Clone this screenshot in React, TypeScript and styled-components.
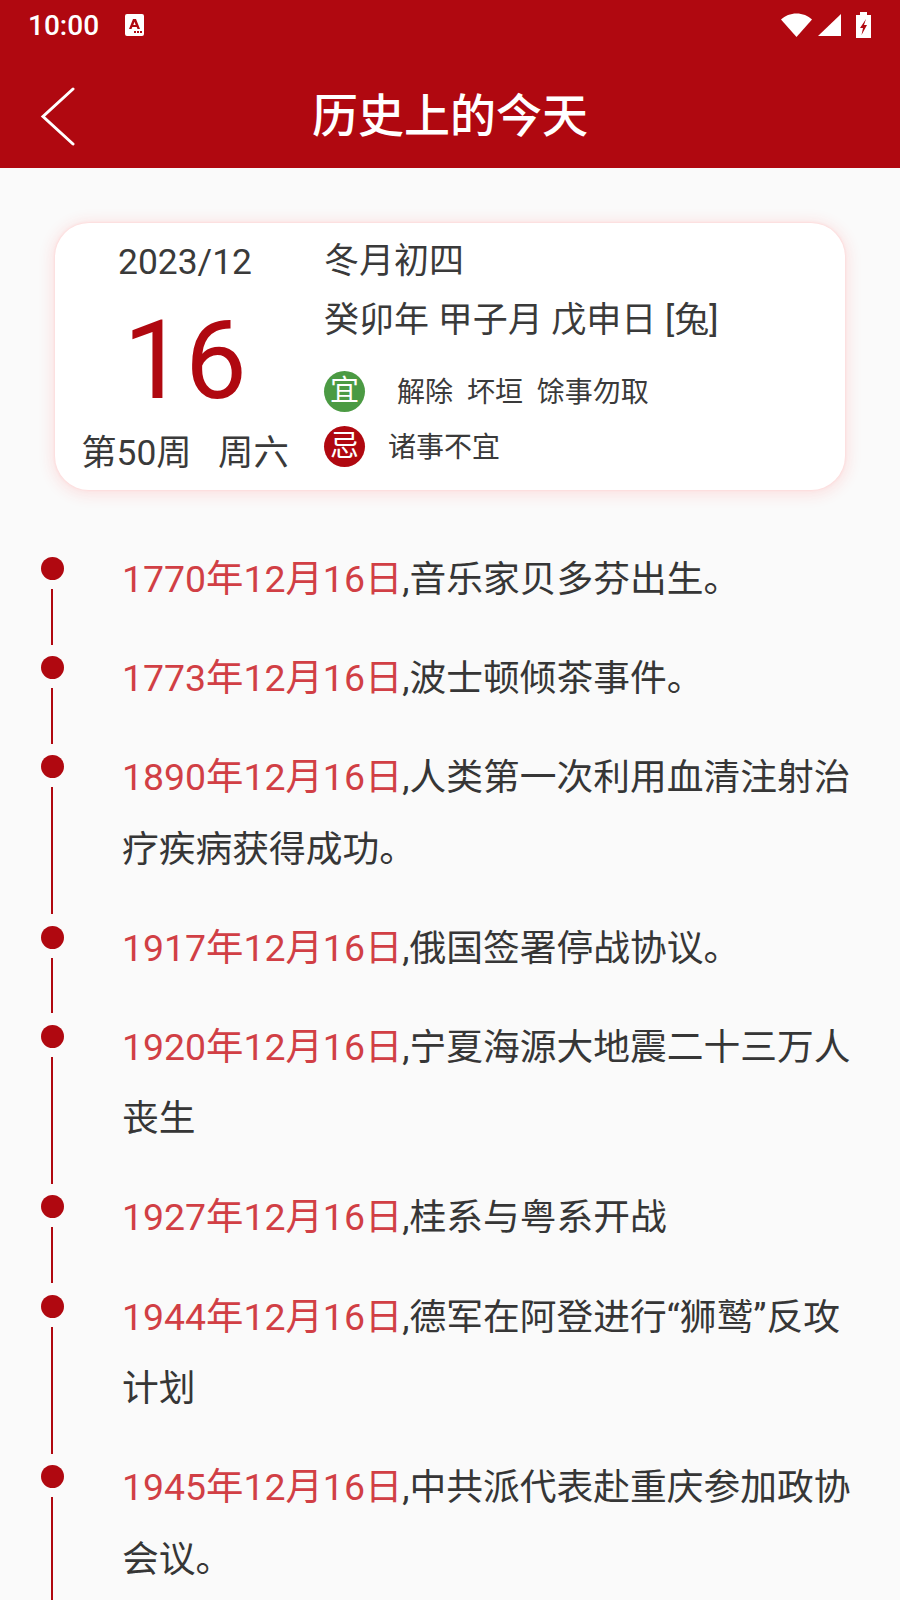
import React from "react";
import styled, { createGlobalStyle } from "styled-components";

const events = [
  { date: "1770年12月16日", text: ",音乐家贝多芬出生。" },
  { date: "1773年12月16日", text: ",波士顿倾茶事件。" },
  { date: "1890年12月16日", text: ",人类第一次利用血清注射治疗疾病获得成功。" },
  { date: "1917年12月16日", text: ",俄国签署停战协议。" },
  { date: "1920年12月16日", text: ",宁夏海源大地震二十三万人丧生" },
  { date: "1927年12月16日", text: ",桂系与粤系开战" },
  { date: "1944年12月16日", text: ",德军在阿登进行“狮鹫”反攻计划" },
  { date: "1945年12月16日", text: ",中共派代表赴重庆参加政协会议。" },
];

const GlobalStyle = createGlobalStyle`
  html, body {
    margin: 0;
    padding: 0;
    background: #fafafa;
  }
  body {
    font-family: Roboto, "Noto Sans CJK SC", sans-serif;
  }
`;

const Page = styled.div`
  width: 900px;
  height: 1600px;
  overflow: hidden;
  background: #fafafa;
  color: #333;
`;

const Header = styled.header`
  height: 168px;
  background: #b00810;
  color: #fff;
  display: flex;
  flex-direction: column;
`;

const StatusBar = styled.div`
  height: 50px;
  padding: 0 29px 0 28px;
  display: flex;
  align-items: center;
  font-size: 28px;
  font-weight: 500;
`;

const StatusTime = styled.span`
  width: 97px;
`;

const StatusRight = styled.div`
  margin-left: auto;
  display: flex;
  align-items: center;
`;

const WifiIcon = styled.svg`
  margin-right: 6px;
`;

const BatteryIcon = styled.svg`
  margin-left: 15px;
`;

const TitleBar = styled.div`
  flex: 1;
  position: relative;
  display: flex;
  align-items: center;
  justify-content: center;
  padding-top: 5px;
`;

const BackIcon = styled.svg`
  position: absolute;
  left: 38px;
  top: 37px;
`;

const Title = styled.h1`
  margin: 0;
  font-size: 46px;
  font-weight: 500;
`;

const Card = styled.section`
  margin: 55px 55px 0;
  height: 267px;
  box-sizing: border-box;
  background: #fff;
  border-radius: 34px;
  box-shadow: 0 0 2px 1px #fddcdc, 0 2px 14px 4px #fbe3e3;
  display: flex;
`;

const DateColumn = styled.div`
  width: 260px;
  flex-shrink: 0;
  display: flex;
  flex-direction: column;
  align-items: center;
`;

const MonthText = styled.div`
  margin-top: 16px;
  font-size: 35.4px;
  line-height: 46px;
  color: #3a3a3a;
`;

const DayText = styled.div`
  margin-top: 13px;
  font-size: 110px;
  line-height: 126px;
  color: #b00810;
`;

const WeekText = styled.div`
  margin-top: 4px;
  font-size: 35.4px;
  line-height: 50px;
  white-space: pre;
  color: #3a3a3a;
`;

const InfoColumn = styled.div`
  margin-left: 9px;
  display: flex;
  flex-direction: column;
  color: #3a3a3a;
`;

const MoonLine = styled.div`
  margin-top: 16px;
  font-size: 35px;
  line-height: 46px;
`;

const GanzhiLine = styled(MoonLine)`
  margin-top: 13px;
`;

const TagRow = styled.div<{ $top: number }>`
  margin-top: ${(p) => p.$top}px;
  display: flex;
  align-items: center;
  font-size: 28px;
  line-height: 41px;
  white-space: pre;
`;

const TagBadge = styled.span<{ $color: string }>`
  width: 41px;
  height: 41px;
  border-radius: 50%;
  background: ${(p) => p.$color};
  color: #fff;
  font-size: 29px;
  text-align: center;
  flex-shrink: 0;
`;

const TagText = styled.span<{ $indent: number }>`
  margin-left: ${(p) => p.$indent}px;
  padding-top: 2px;
  line-height: 39px;
`;

const Timeline = styled.ol`
  list-style: none;
  margin: 53px 0 0;
  padding: 0 41px;
`;

const Item = styled.li`
  display: flex;
  padding-bottom: 26.6px;
`;

const Rail = styled.div`
  width: 23px;
  flex-shrink: 0;
  position: relative;
  padding-top: 14px;
`;

const Dot = styled.div`
  width: 23px;
  height: 23px;
  border-radius: 50%;
  background: #b00810;
`;

const RailLine = styled.div`
  position: absolute;
  left: 10px;
  top: 46px;
  bottom: -29px;
  width: 2px;
  background: #b00810;
  ${Item}:last-child & {
    bottom: -200px;
  }
`;

const EventText = styled.p`
  margin: 0 0 0 58px;
  padding-top: 1px;
  height: fit-content;
  width: 740px;
  font-size: 36.75px;
  line-height: 71.5px;
  color: #363636;
`;

const EventDate = styled.span`
  font-size: 37.4px;
  color: #d13f45;
`;

const App = () => {
  return (
    <Page>
      <GlobalStyle />
      <Header>
        <StatusBar>
          <StatusTime>10:00</StatusTime>
          <svg width="19" height="22" viewBox="0 0 19 22">
            <path
              fill="#fff"
              fillRule="evenodd"
              d="M2 0h15a2 2 0 0 1 2 2v18a2 2 0 0 1-2 2H2a2 2 0 0 1-2-2V2a2 2 0 0 1 2-2zM8 5l-4 10h2.500l.8-2h4.400l.8 2h2.500L11 5zM8.300 11L9.500 7.800 10.700 11zM9 17h2v2H9zM12 17h2v2h-2zM15 17h2v2h-2z"
            />
          </svg>
          <StatusRight>
            <WifiIcon width="31" height="24" viewBox="0 0 31 24">
              <path fill="#fff" d="M15.500 24L0 6.500C4 2.800 9.500 0.500 15.500 0.500s11.500 2.300 15.500 6z" />
            </WifiIcon>
            <svg width="23" height="22" viewBox="0 0 23 22">
              <path fill="#fff" d="M23 0v22H0z" />
            </svg>
            <BatteryIcon width="15" height="26" viewBox="0 0 15 26">
              <path
                fill="#fff"
                fillRule="evenodd"
                d="M4 3V0h7v3h4v23H0V3zM10 7L4 16h3l-1.500 7 5.500-10H8z"
              />
            </BatteryIcon>
          </StatusRight>
        </StatusBar>
        <TitleBar>
          <BackIcon width="38" height="60" viewBox="0 0 38 60">
            <path d="M35 2L5 29.500 35 57" fill="none" stroke="#fff" strokeWidth="3" strokeLinecap="round" />
          </BackIcon>
          <Title>历史上的今天</Title>
        </TitleBar>
      </Header>

      <Card>
        <DateColumn>
          <MonthText>2023/12</MonthText>
          <DayText>16</DayText>
          <WeekText>第50周   周六</WeekText>
        </DateColumn>
        <InfoColumn>
          <MoonLine>冬月初四</MoonLine>
          <GanzhiLine>癸卯年 甲子月 戊申日 [兔]</GanzhiLine>
          <TagRow $top={27}>
            <TagBadge $color="#4b9a43">宜</TagBadge>
            <TagText $indent={32}>解除  坏垣  馀事勿取</TagText>
          </TagRow>
          <TagRow $top={14}>
            <TagBadge $color="#b00810">忌</TagBadge>
            <TagText $indent={23}>诸事不宜</TagText>
          </TagRow>
        </InfoColumn>
      </Card>

      <Timeline>
        {events.map((e) => (
          <Item key={e.date}>
            <Rail>
              <Dot />
              <RailLine />
            </Rail>
            <EventText>
              <EventDate>{e.date}</EventDate>
              {e.text}
            </EventText>
          </Item>
        ))}
      </Timeline>
    </Page>
  );
};

export default App;
